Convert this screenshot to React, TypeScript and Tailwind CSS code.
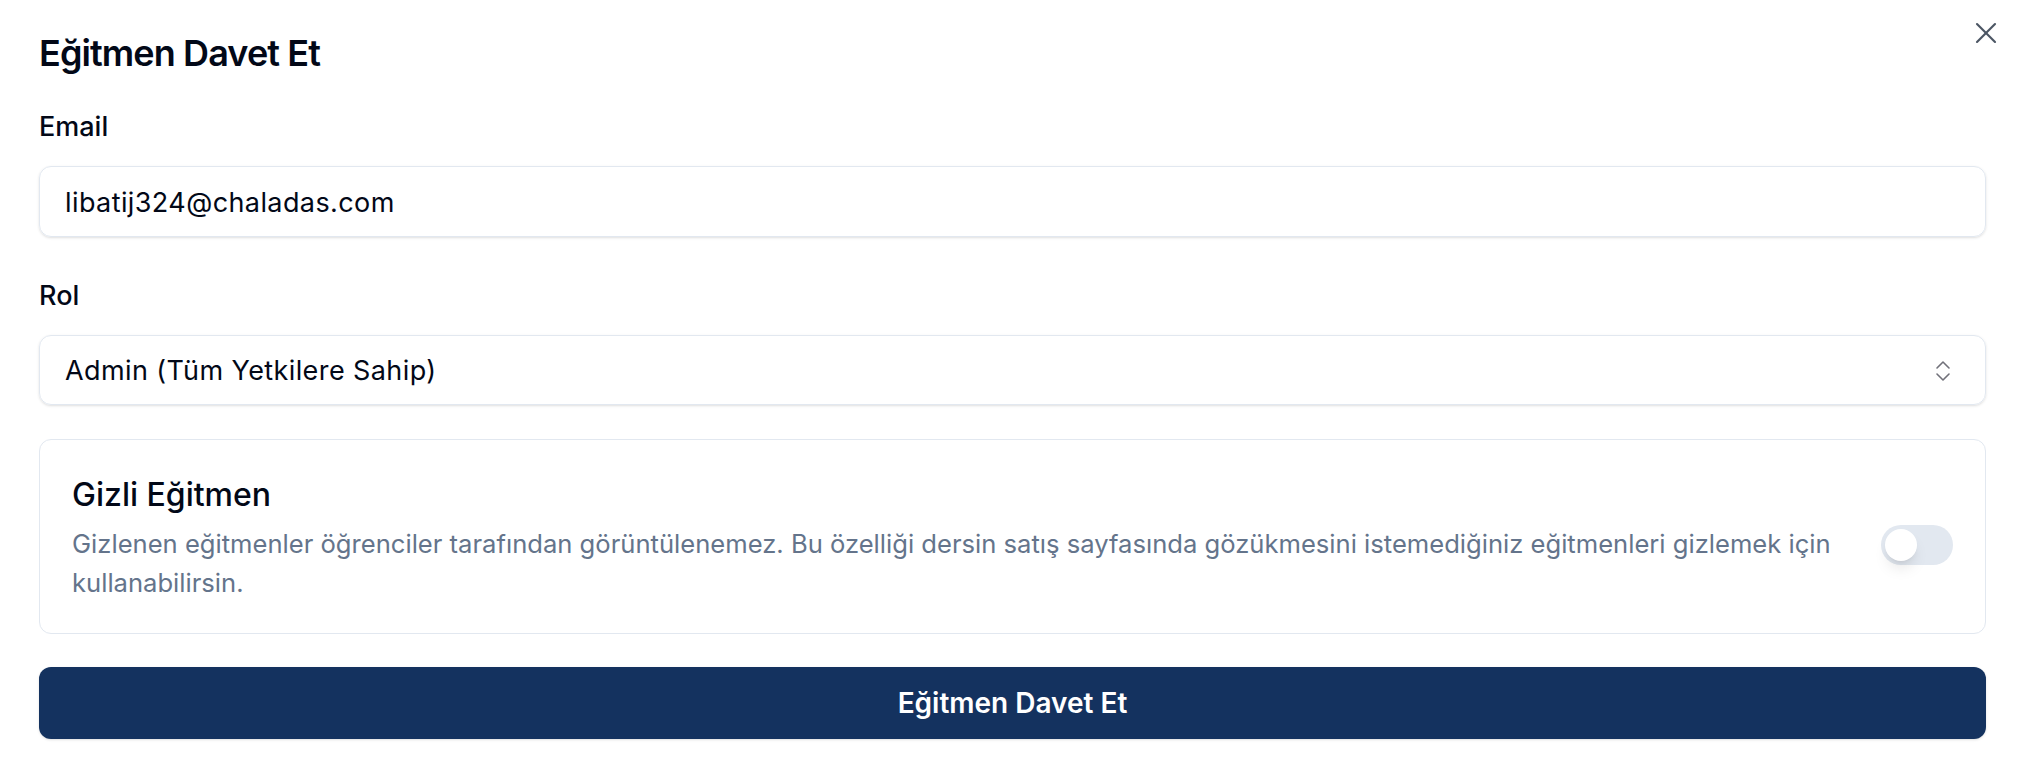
import { X } from "lucide-react";

const font = { fontFamily: "Inter, 'Noto Sans', sans-serif" };

const ChevronsUpDown = () => (
  <svg width="16" height="22" viewBox="0 0 16 22" fill="none" stroke="#71717a" strokeWidth="1.6" strokeLinecap="round" strokeLinejoin="round">
    <path d="M2 8l6-6 6 6" />
    <path d="M2 14l6 6 6-6" />
  </svg>
);

const App = () => {
  return (
    <div className="relative bg-white min-h-[776px] w-full pl-[39px] pr-10 pt-[33px] pb-[36px] text-[#020817]" style={font}>
      <button type="button" className="absolute right-[22px] top-[15px] text-[#4b5563]">
        <X size={36} strokeWidth={1.4} />
      </button>

      <h2 className="text-[36px] leading-10 font-semibold tracking-tight">Eğitmen Davet Et</h2>

      <div className="mt-[36px]">
        <label className="block text-[27px] leading-9 font-medium">Email</label>
        <div className="mt-[21px] h-[71px] rounded-xl border border-[#e2e8f0] shadow-sm flex items-center px-[25px] pt-1 text-[27px] tracking-[0.015em]">
          libatij324@chaladas.com
        </div>
      </div>

      <div className="mt-[41px]">
        <label className="block text-[27px] leading-9 font-medium">Rol</label>
        <div className="mt-[21px] h-[70px] rounded-xl border border-[#e2e8f0] shadow-sm flex items-center justify-between pl-[25px] pr-[34px] pt-[2px] text-[27px] tracking-[0.015em]">
          <span>Admin (Tüm Yetkilere Sahip)</span>
          <ChevronsUpDown />
        </div>
      </div>

      <div className="mt-[34px] rounded-xl border border-[#e2e8f0] flex items-center gap-6 pl-8 pr-8 pt-[31px] pb-[31px]">
        <div className="flex-1">
          <div className="text-[32px] leading-[47px] font-medium">Gizli Eğitmen</div>
          <p className="mt-[6px] text-[25.6px] leading-[39px] text-[#64748b]">
            Gizlenen eğitmenler öğrenciler tarafından görüntülenemez. Bu özelliği dersin satış sayfasında gözükmesini istemediğiniz eğitmenleri gizlemek için kullanabilirsin.
          </p>
        </div>
        <div className="mt-4 w-[72px] h-10 rounded-full bg-[#e2e8f0] p-1 shrink-0">
          <div className="w-8 h-8 rounded-full bg-white shadow-lg" />
        </div>
      </div>

      <button type="button" className="mt-[33px] w-full h-[72px] rounded-xl bg-[#14325f] text-white text-[28px] font-semibold shadow-sm">
        Eğitmen Davet Et
      </button>
    </div>
  );
};

export default App;
